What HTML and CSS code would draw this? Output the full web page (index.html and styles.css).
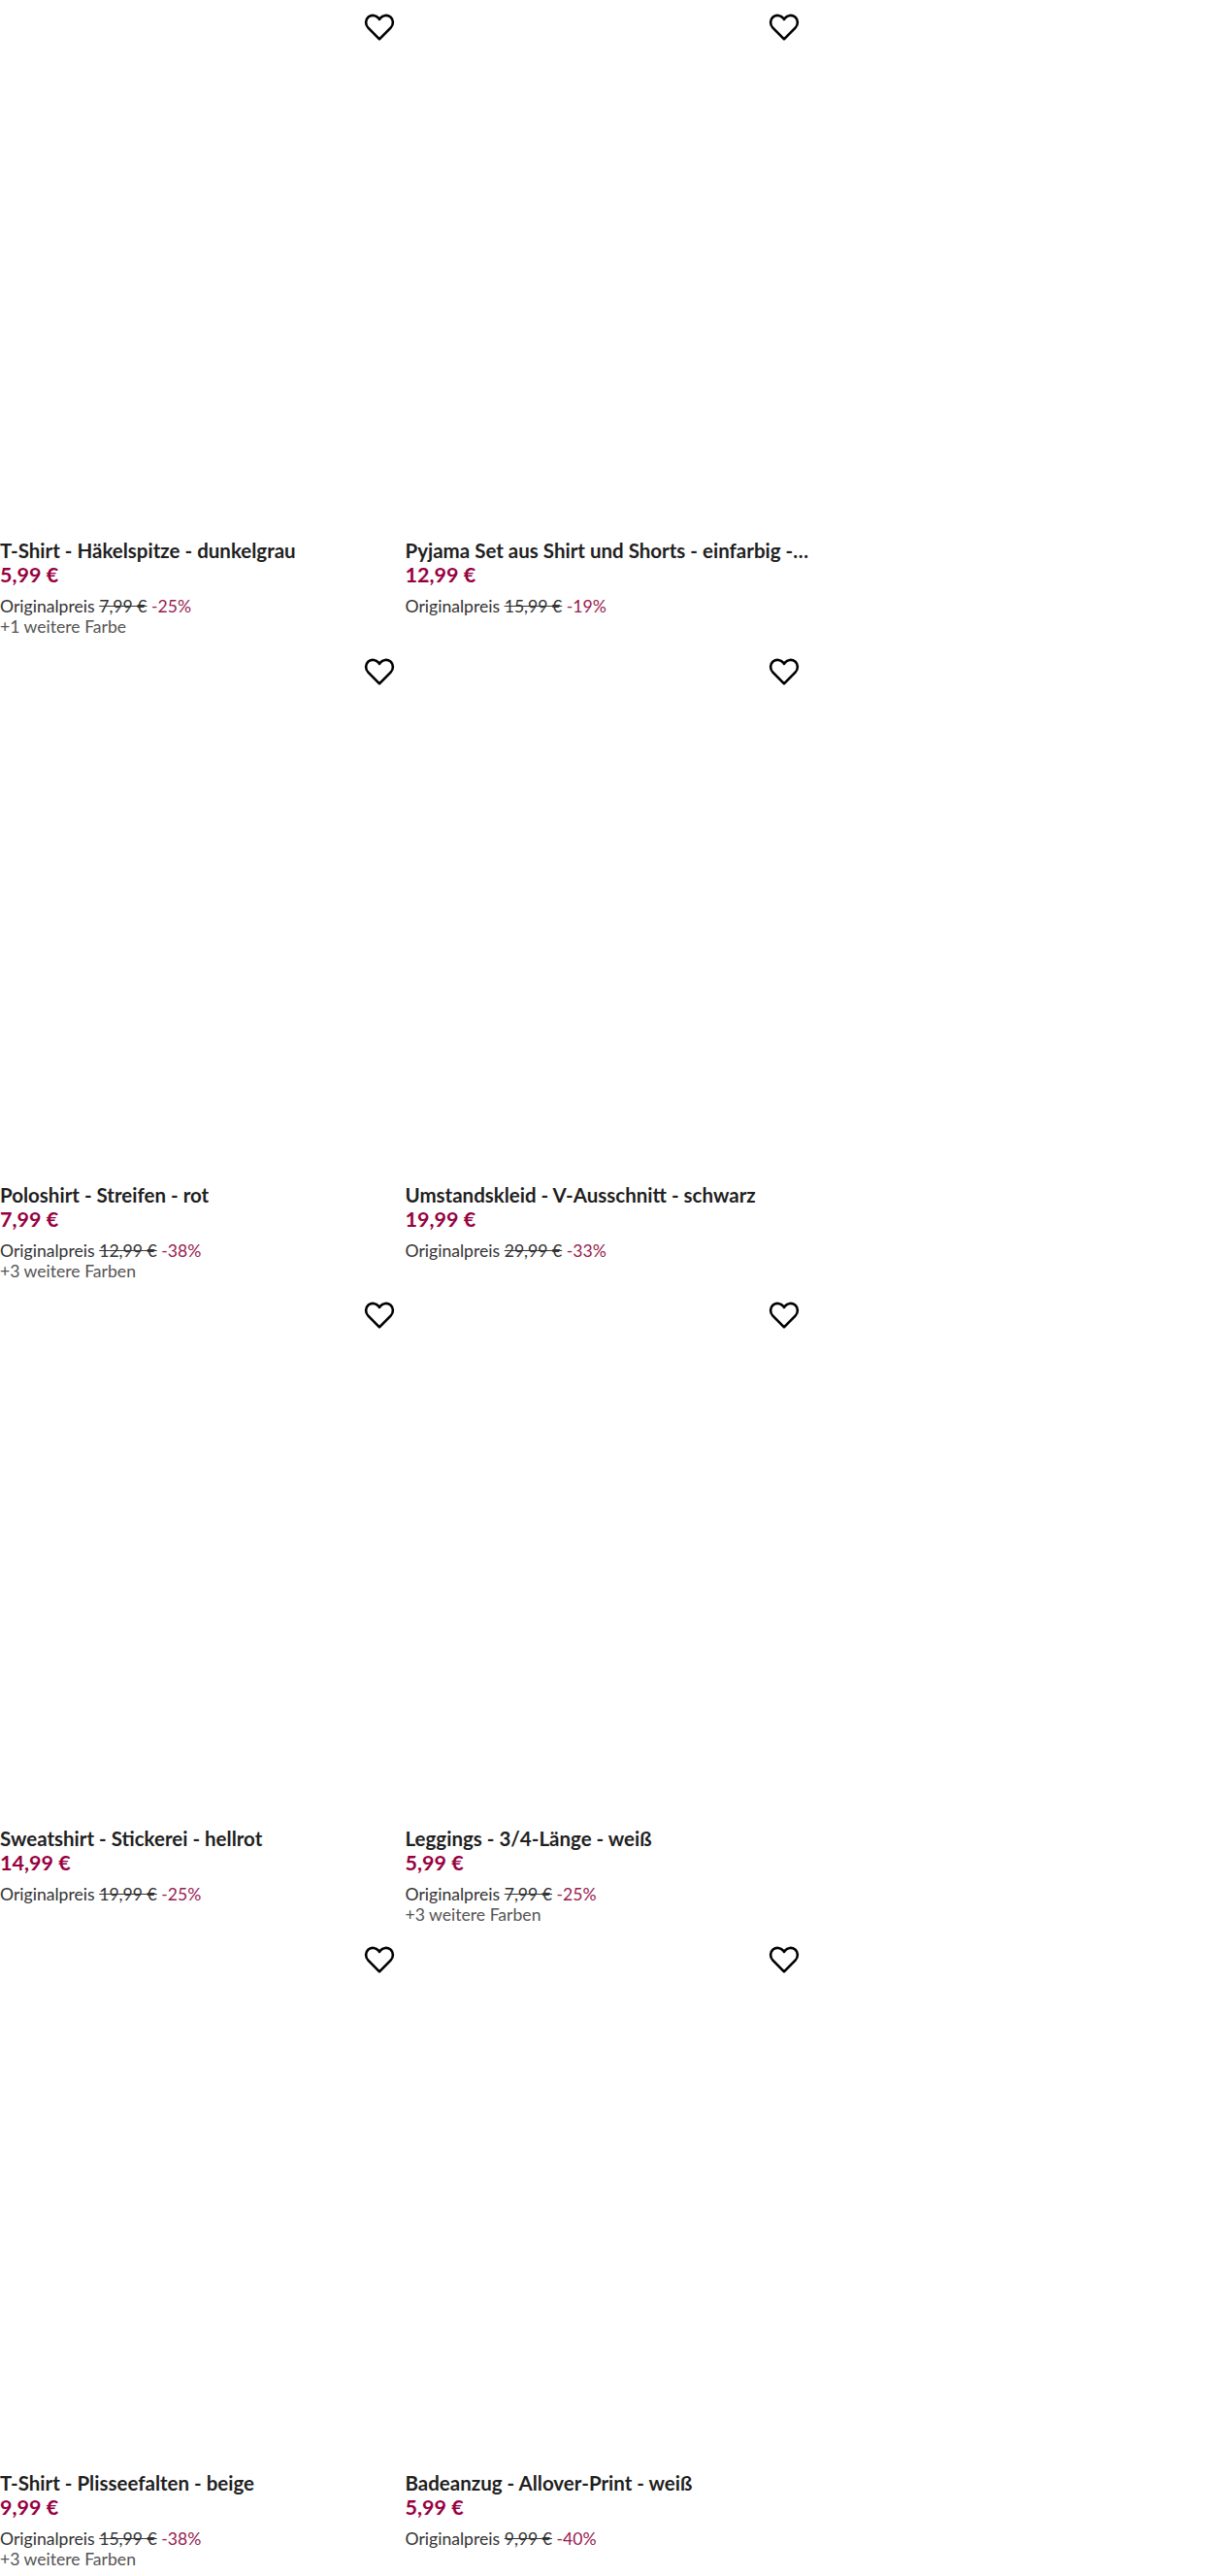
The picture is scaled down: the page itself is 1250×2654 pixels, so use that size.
FILE: index.html
```html
<!DOCTYPE html>
<html lang="de">
<head>
  <meta charset="UTF-8" />
  <title>Produkte</title>
  <link rel="stylesheet" href="styles.css">
</head>
<body>
  <svg class="icon-defs" width="0" height="0">
    <symbol id="heart" viewBox="0 0 32 32">
      <path d="M16 28.4 L4.4 16.6 C1.2 13.2 1.4 8.4 4.6 5.6 C7.8 3 12.6 3.4 15 6.6 L16 8 L17 6.6 C19.4 3.4 24.2 3 27.4 5.6 C30.6 8.4 30.8 13.2 27.6 16.6 Z" fill="none" stroke="currentColor" stroke-width="2.6" stroke-linejoin="round"/>
    </symbol>
  </svg>

  <div class="grid">
    <div class="card">
      <div class="card-image"><button class="wish"><svg><use href="#heart"/></svg></button></div>
      <div class="title">T-Shirt - Häkelspitze - dunkelgrau</div>
      <div class="price">5,99 €</div>
      <div class="original">Originalpreis <s>7,99 €</s> <span class="discount">-25%</span></div>
      <div class="colors">+1 weitere Farbe</div>
    </div>
    <div class="card">
      <div class="card-image"><button class="wish"><svg><use href="#heart"/></svg></button></div>
      <div class="title">Pyjama Set aus Shirt und Shorts - einfarbig - weiß</div>
      <div class="price">12,99 €</div>
      <div class="original">Originalpreis <s>15,99 €</s> <span class="discount">-19%</span></div>
    </div>
    <div class="card">
      <div class="card-image"><button class="wish"><svg><use href="#heart"/></svg></button></div>
      <div class="title">Poloshirt - Streifen - rot</div>
      <div class="price">7,99 €</div>
      <div class="original">Originalpreis <s>12,99 €</s> <span class="discount">-38%</span></div>
      <div class="colors">+3 weitere Farben</div>
    </div>
    <div class="card">
      <div class="card-image"><button class="wish"><svg><use href="#heart"/></svg></button></div>
      <div class="title">Umstandskleid - V-Ausschnitt - schwarz</div>
      <div class="price">19,99 €</div>
      <div class="original">Originalpreis <s>29,99 €</s> <span class="discount">-33%</span></div>
    </div>
    <div class="card">
      <div class="card-image"><button class="wish"><svg><use href="#heart"/></svg></button></div>
      <div class="title">Sweatshirt - Stickerei - hellrot</div>
      <div class="price">14,99 €</div>
      <div class="original">Originalpreis <s>19,99 €</s> <span class="discount">-25%</span></div>
    </div>
    <div class="card">
      <div class="card-image"><button class="wish"><svg><use href="#heart"/></svg></button></div>
      <div class="title">Leggings - 3/4-Länge - weiß</div>
      <div class="price">5,99 €</div>
      <div class="original">Originalpreis <s>7,99 €</s> <span class="discount">-25%</span></div>
      <div class="colors">+3 weitere Farben</div>
    </div>
    <div class="card">
      <div class="card-image"><button class="wish"><svg><use href="#heart"/></svg></button></div>
      <div class="title">T-Shirt - Plisseefalten - beige</div>
      <div class="price">9,99 €</div>
      <div class="original">Originalpreis <s>15,99 €</s> <span class="discount">-38%</span></div>
      <div class="colors">+3 weitere Farben</div>
    </div>
    <div class="card">
      <div class="card-image"><button class="wish"><svg><use href="#heart"/></svg></button></div>
      <div class="title">Badeanzug - Allover-Print - weiß</div>
      <div class="price">5,99 €</div>
      <div class="original">Originalpreis <s>9,99 €</s> <span class="discount">-40%</span></div>
    </div>
  </div>
</body>
</html>
```

FILE: styles.css
```css
* { margin: 0; padding: 0; box-sizing: border-box; }

body {
  background: #fff;
  font-family: 'Lato', 'Noto Sans', sans-serif;
  overflow: hidden;
}

.icon-defs {
  position: absolute;
}

.grid {
  display: grid;
  grid-template-columns: 417.5px 417.5px;
  grid-auto-rows: 663.5px;
}

.card-image {
  position: relative;
  height: 555px;
}

.wish {
  position: absolute;
  top: 12px;
  right: 11px;
  width: 32px;
  height: 32px;
  border: none;
  background: none;
  color: #000;
}

.wish svg {
  display: block;
  width: 32px;
  height: 32px;
}

.title {
  font-size: 20.5px;
  font-weight: 700;
  line-height: 25px;
  color: #1f1f1f;
  white-space: nowrap;
  overflow: hidden;
  text-overflow: ellipsis;
}

.price {
  font-size: 21.5px;
  font-weight: 700;
  line-height: 25px;
  color: #97003f;
}

.original {
  margin-top: 9px;
  font-size: 17.6px;
  line-height: 22px;
  color: #333;
}

.discount {
  color: #97204f;
}

.colors {
  font-size: 17.6px;
  line-height: 20px;
  color: #555;
}
```
